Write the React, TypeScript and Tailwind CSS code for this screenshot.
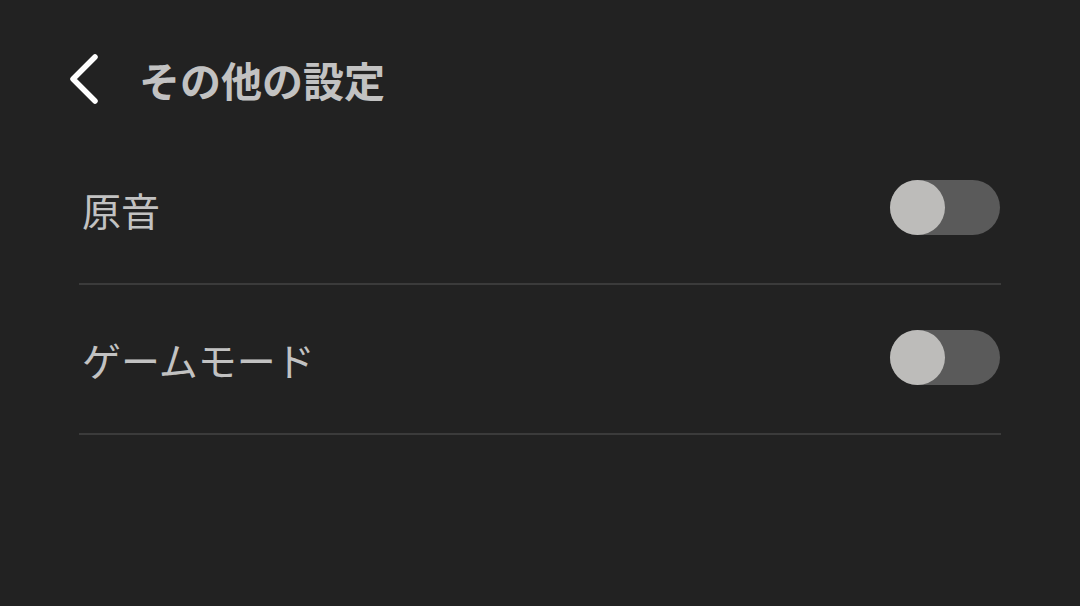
import React, { useState } from "react";

const Toggle: React.FC<{ on: boolean; onChange: () => void }> = ({ on, onChange }) => (
    <button
        type="button"
        onClick={onChange}
        className={`relative w-[110px] h-[55px] rounded-full ${on ? "bg-[#7a7a7a]" : "bg-[#5a5a5a]"}`}
    >
        <span
            className={`absolute top-0 h-[55px] w-[55px] rounded-full bg-[#bdbcba] ${on ? "left-[55px]" : "left-0"}`}
        />
    </button>
);

const App: React.FC = () => {
    const [original, setOriginal] = useState(false);
    const [gameMode, setGameMode] = useState(false);

    const rows = [
        { label: "原音", on: original, toggle: () => setOriginal(!original) },
        { label: "ゲームモード", on: gameMode, toggle: () => setGameMode(!gameMode) },
    ];

    return (
        <div
            className="w-[1080px] h-[606px] bg-[#222222] overflow-hidden"
            style={{ fontFamily: '"Noto Sans CJK JP", "Noto Sans", sans-serif' }}
        >
            <div className="flex items-center h-[48px] mt-[55px] pl-[68px]">
                <svg width="32" height="50" viewBox="0 0 32 50" className="shrink-0">
                    <path
                        d="M27 3 L5 25 L27 47"
                        fill="none"
                        stroke="#ffffff"
                        strokeWidth="5.5"
                        strokeLinecap="round"
                        strokeLinejoin="round"
                    />
                </svg>
                <h1 className="ml-[39px] text-[41px] font-bold text-[#c2c2c2] leading-none">その他の設定</h1>
            </div>

            <div className="mt-[32px] ml-[79px] w-[922px]">
                {rows.map((r) => (
                    <div key={r.label} className="flex items-center justify-between h-[150px] border-b-2 border-[#3b3b3b]">
                        <span className="pl-[3px] text-[39px] text-[#c2c2c2] leading-none">{r.label}</span>
                        <div className="mr-[1px] mt-[2px]">
                            <Toggle on={r.on} onChange={r.toggle} />
                        </div>
                    </div>
                ))}
            </div>
        </div>
    );
};

export default App;
